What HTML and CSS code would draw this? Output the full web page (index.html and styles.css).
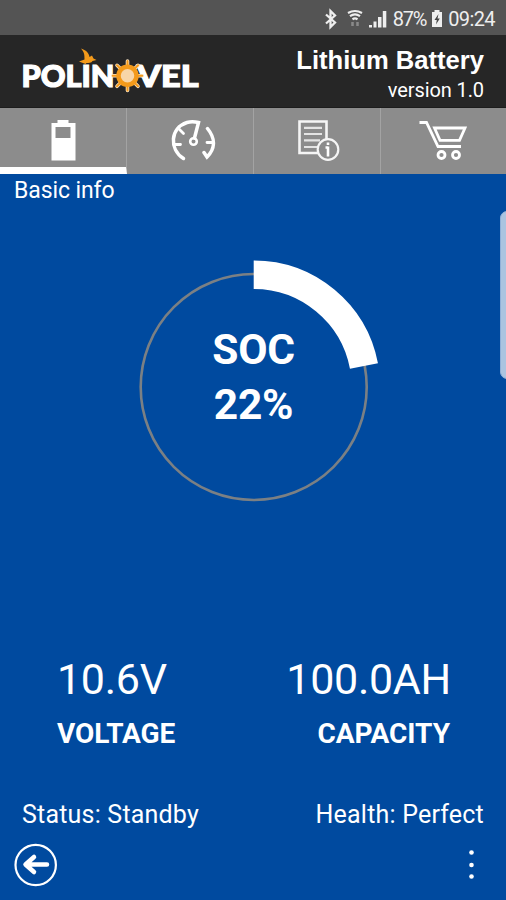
FILE: index.html
```html
<!DOCTYPE html>
<html lang="en">
<head>
    <meta charset="UTF-8">
    <meta name="viewport" content="width=device-width, initial-scale=1.0">
    <title>Lithium Battery</title>
    <link rel="stylesheet" href="styles.css">
</head>
<body>
    <div class="status-bar">
        <svg class="status-icons" width="64" height="22" viewBox="0 0 64 22">
            <!-- bluetooth -->
            <path d="M3 6.500l9 8-4.500 4.500V3l4.500 4.500-9 8" fill="none" stroke="#eee" stroke-width="2.300"/>
            <!-- wifi -->
            <path d="M25 5q7-4 14 0M27 8.200q5-3.500 10 0M29.500 11.300q2.500-2 5 0" fill="none" stroke="#eee" stroke-width="2.200"/>
            <path d="M29.500 14v4M34.500 14v4" stroke="#8a8a8a" stroke-width="2.500"/>
            <!-- signal -->
            <path d="M46 17h3v2.500h-3zM50.500 13.500h3v6h-3zM55 9h3.500v10.500H55zM59.800 3h3.500v16.500h-3.500z" fill="#eee"/>
        </svg>
        <span class="percent">87%</span>
        <svg class="charge" width="12" height="19" viewBox="0 0 12 19">
            <path d="M3.500 1h5v2H11v15H1V3h2.500z" fill="#eee"/>
            <path d="M7.500 5L3.500 11h2.300L5 15.500 8.800 9.500H6.500z" fill="#444"/>
        </svg>
        <span class="clock">09:24</span>
    </div>

    <header class="header">
        <svg class="logo" width="182" height="50" viewBox="20 46 182 50">
            <g class="logo-text">
                <text x="21.500" y="87" textLength="93" lengthAdjust="spacingAndGlyphs">POLIN</text>
                <text x="137" y="87" textLength="61.500" lengthAdjust="spacingAndGlyphs">VEL</text>
            </g>
            <path d="M81 48.500c5 1.500 8 4.500 8.500 8.500l2.500-1.500 1.500 3 3 1.500-4 1c-1 2-4 2-6 2l-1 1-6.500-2.500 5.500-2c0-5 0-7-3.500-11z" fill="#f39a1b"/>
            <g class="wheel">
                <path d="M127.500 61v29.500M112.800 75.800h29.400M117 65.300l21 21M117 86.300l21-21" class="spokes-edge"/>
                <path d="M127.500 61v29.500M112.800 75.800h29.400M117 65.300l21 21M117 86.300l21-21" class="spokes"/>
                <circle cx="127.500" cy="75.800" r="9" fill="#f8d6a8" stroke="#f39a1b" stroke-width="4.500"/>
            </g>
        </svg>
        <div class="title-group">
            <h1>Lithium Battery</h1>
            <p>version 1.0</p>
        </div>
    </header>

    <nav class="tabs">
        <a class="tab active">
            <svg width="26" height="42" viewBox="51 119 26 42">
                <path fill-rule="evenodd" d="M58.500 120h11v3h7v37.500h-24V123h6zM56.500 127v11h15v-11z" fill="#fff"/>
            </svg>
        </a>
        <a class="tab">
            <svg width="54" height="44" viewBox="163 118 54 44">
                <g fill="none" stroke="#fff" stroke-width="3.500" stroke-linecap="round">
                    <path d="M183.500 158.500C169 149 170 128 187 122.500Q192 121 198.500 122.500L194.500 138"/>
                    <path d="M207.500 128.500C216 139 215 149 207 157L204 152.500"/>
                    <path d="M179.500 129.500l4 4M175.500 144.500h5M207 142.500h5" stroke-width="2.800"/>
                    <circle cx="193.500" cy="141.500" r="3.300" stroke-width="2.600"/>
                </g>
            </svg>
        </a>
        <a class="tab">
            <svg width="46" height="44" viewBox="294 118 46 44">
                <path d="M299.500 121.500H326.500V153H299.500z" fill="none" stroke="#f5f5f5" stroke-width="2.600"/>
                <path d="M304 127.800h18M304 134h18M304 140.300h16M304 147h14" stroke="#e4e4e4" stroke-width="2.200"/>
                <circle cx="328" cy="149.500" r="10.300" fill="#8c8c8c" stroke="#f5f5f5" stroke-width="2.200"/>
                <path d="M325.500 147.500h2.500M328 146.500v10M328 142.500v2.500" stroke="#fff" stroke-width="2.600"/>
            </svg>
        </a>
        <a class="tab">
            <svg width="50" height="44" viewBox="419 118 50 44">
                <g fill="none" stroke="#fff" stroke-width="2.800">
                    <path d="M419.500 122.500h7L438 146.500h23"/>
                    <path d="M434.500 128h30.500L459.500 140.300H440z"/>
                    <circle cx="441.500" cy="155" r="3.500"/>
                    <circle cx="456" cy="155" r="3.500"/>
                </g>
            </svg>
        </a>
    </nav>

    <main class="content">
        <div class="section-title">Basic info</div>
        <div class="edge-handle"></div>

        <div class="gauge">
            <svg width="254" height="254" viewBox="0 0 254 254">
                <circle cx="127.700" cy="127" r="113" fill="none" stroke="#7b8084" stroke-width="2.600"/>
                <path d="M127.700 14.750A112.250 112.250 0 0 1 237.960 105.970" fill="none" stroke="#fff" stroke-width="28.500"/>
            </svg>
            <div class="gauge-label">
                <span>SOC</span>
                <span>22%</span>
            </div>
        </div>

        <div class="readings">
            <div class="reading voltage">
                <span class="value">10.6V</span>
                <span class="name">VOLTAGE</span>
            </div>
            <div class="reading capacity">
                <span class="value">100.0AH</span>
                <span class="name">CAPACITY</span>
            </div>
        </div>

        <div class="states">
            <span>Status: Standby</span>
            <span>Health: Perfect</span>
        </div>

        <footer class="footer">
            <svg width="44" height="44" viewBox="0 0 44 44">
                <circle cx="21.700" cy="22" r="20.200" fill="none" stroke="#fff" stroke-width="2.200"/>
                <path d="M33 21.500H12M20 14l-8.500 7.500L20 29" fill="none" stroke="#fff" stroke-width="4.500" stroke-linecap="round" stroke-linejoin="round"/>
            </svg>
            <svg width="6" height="32" viewBox="0 0 6 32">
                <g fill="#fff">
                    <circle cx="3.500" cy="3.500" r="2.300"/>
                    <circle cx="3.500" cy="16" r="2.300"/>
                    <circle cx="3.500" cy="27.500" r="2.300"/>
                </g>
            </svg>
        </footer>
    </main>
</body>
</html>
```
FILE: styles.css
```css
* {
    box-sizing: border-box;
}

body {
    margin: 0;
    height: 900px;
    display: flex;
    flex-direction: column;
    overflow: hidden;
    font-family: Roboto, sans-serif;
    color: #fff;
    background-color: #004a9f;
}

svg {
    display: block;
}

.status-bar {
    height: 35px;
    padding: 2px 11px 0 0;
    display: flex;
    justify-content: flex-end;
    align-items: center;
    background-color: #545454;
    color: #eee;
    font-size: 20px;
    line-height: 24px;
}

.percent {
    margin-left: 6px;
    letter-spacing: -1.2px;
}

.charge {
    margin: 0 5px 0 5px;
}

.clock {
    letter-spacing: -0.6px;
}

.header {
    height: 73px;
    padding: 11px 22px 0 20px;
    display: flex;
    justify-content: space-between;
    align-items: flex-start;
    background-color: #262626;
    border-bottom: 1px solid #1c1c1c;
}

.logo-text {
    font-family: Lato, sans-serif;
    font-size: 30px;
    font-weight: 900;
    fill: #fff;
    stroke: #fff;
    stroke-width: 1.2;
}

.spokes-edge {
    stroke: #fbe3c3;
    stroke-width: 3.6;
    stroke-linecap: round;
}

.spokes {
    stroke: #f39a1b;
    stroke-width: 2;
    stroke-linecap: round;
}

.title-group {
    text-align: right;
}

.title-group h1 {
    margin: -1px 0 0;
    font-family: "Liberation Sans", Arial, sans-serif;
    font-size: 25.6px;
    line-height: 30px;
}

.title-group p {
    margin: 1px 0 0;
    font-size: 20px;
    line-height: 28px;
    letter-spacing: -0.1px;
}

.tabs {
    height: 66px;
    display: grid;
    grid-template-columns: 127px 127px 127px 1fr;
    background-color: #8c8c8c;
}

.tab {
    display: flex;
    justify-content: center;
    align-items: flex-start;
    padding-top: 10px;
    border-right: 1px solid #a3a3a3;
}

.tab:last-child {
    border-right: none;
}

.tab.active {
    padding-top: 11px;
    border-bottom: 7px solid #fff;
}

.content {
    flex: 1;
    display: flex;
    flex-direction: column;
    position: relative;
}

.section-title {
    height: 86px;
    padding: 3px 14px 0;
    font-size: 23px;
    line-height: 27px;
    letter-spacing: -0.1px;
}

/* edge panel handle of the phone, lies over the page */
.edge-handle {
    position: absolute;
    top: 37px;
    right: -8px;
    width: 14px;
    height: 168px;
    border-radius: 7px;
    background-color: #aac4e0;
    border: 1px solid #8fb0d8;
}

.gauge {
    align-self: center;
    display: grid;
    height: 254px;
}

.gauge > * {
    grid-area: 1 / 1;
}

.gauge-label {
    padding: 62px 0 0 1px;
    display: flex;
    flex-direction: column;
    align-items: center;
    font-size: 42.5px;
    font-weight: 700;
    line-height: 55px;
    letter-spacing: -0.3px;
}

.readings {
    margin-top: 138px;
    padding: 0 55px 0 57px;
    display: flex;
    justify-content: space-between;
}

.reading {
    display: flex;
    flex-direction: column;
}

.capacity {
    align-items: flex-end;
}

.value {
    font-size: 43px;
    line-height: 54px;
    letter-spacing: -0.3px;
}

.name {
    font-size: 28px;
    font-weight: 700;
    line-height: 56px;
    letter-spacing: -0.1px;
}

.capacity .name {
    letter-spacing: 0;
    margin-right: 1px;
}

.states {
    margin-top: 38px;
    padding: 0 22px;
    display: flex;
    justify-content: space-between;
    font-size: 25px;
    line-height: 30px;
    letter-spacing: 0.2px;
}

.footer {
    margin-top: 13px;
    padding: 0 32px 0 14px;
    display: flex;
    justify-content: space-between;
    align-items: center;
}
```
